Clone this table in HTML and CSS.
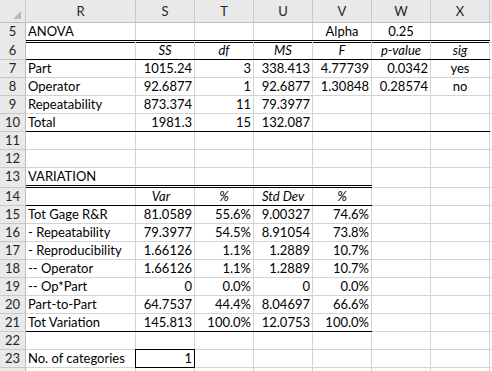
FILE: index.html
```html
<!DOCTYPE html>
<html>
<head>
<meta charset="utf-8">
<link rel="stylesheet" href="styles.css">
</head>
<body>
<div class="sheet">
  <div class="row hdr">
    <div class="corner"><svg width="25" height="22" viewBox="0 0 25 22"><polygon points="21,11 21,19 13,19" fill="#b9b9b9"/></svg></div>
    <div>R</div><div>S</div><div>T</div><div>U</div><div>V</div><div>W</div><div>X</div><div></div>
  </div>
  <div class="row dbl r19">
    <div class="rh">5</div><div class="d">ANOVA</div><div class="d"></div><div class="d"></div><div class="d"></div><div class="d m">Alpha</div><div class="d m">0.25</div><div class="d"></div><div></div>
  </div>
  <div class="row">
    <div class="rh">6</div><div class="t"></div><div class="t m i">SS</div><div class="t m i">df</div><div class="t m i">MS</div><div class="t m i">F</div><div class="t m i">p-value</div><div class="t m i">sig</div><div></div>
  </div>
  <div class="row">
    <div class="rh">7</div><div>Part</div><div class="n">1015.24</div><div class="n">3</div><div class="n">338.413</div><div class="n">4.77739</div><div class="n">0.0342</div><div class="m">yes</div><div></div>
  </div>
  <div class="row">
    <div class="rh">8</div><div>Operator</div><div class="n">92.6877</div><div class="n">1</div><div class="n">92.6877</div><div class="n">1.30848</div><div class="n">0.28574</div><div class="m">no</div><div></div>
  </div>
  <div class="row">
    <div class="rh">9</div><div>Repeatability</div><div class="n">873.374</div><div class="n">11</div><div class="n">79.3977</div><div></div><div></div><div></div><div></div>
  </div>
  <div class="row">
    <div class="rh">10</div><div class="t">Total</div><div class="t n">1981.3</div><div class="t n">15</div><div class="t n">132.087</div><div class="t"></div><div class="t"></div><div class="t"></div><div></div>
  </div>
  <div class="row">
    <div class="rh">11</div><div></div><div></div><div></div><div></div><div></div><div></div><div></div><div></div>
  </div>
  <div class="row">
    <div class="rh">12</div><div></div><div></div><div></div><div></div><div></div><div></div><div></div><div></div>
  </div>
  <div class="row dbl r20">
    <div class="rh">13</div><div class="d">VARIATION</div><div class="d"></div><div class="d"></div><div class="d"></div><div class="d"></div><div></div><div></div><div></div>
  </div>
  <div class="row">
    <div class="rh">14</div><div class="t"></div><div class="t m i var">Var</div><div class="t m i">%</div><div class="t m i">Std Dev</div><div class="t m i">%</div><div></div><div></div><div></div>
  </div>
  <div class="row">
    <div class="rh">15</div><div>Tot Gage R&amp;R</div><div class="n">81.0589</div><div class="n">55.6%</div><div class="n">9.00327</div><div class="n">74.6%</div><div></div><div></div><div></div>
  </div>
  <div class="row">
    <div class="rh">16</div><div>- Repeatability</div><div class="n">79.3977</div><div class="n">54.5%</div><div class="n">8.91054</div><div class="n">73.8%</div><div></div><div></div><div></div>
  </div>
  <div class="row">
    <div class="rh">17</div><div>- Reproducibility</div><div class="n">1.66126</div><div class="n">1.1%</div><div class="n">1.2889</div><div class="n">10.7%</div><div></div><div></div><div></div>
  </div>
  <div class="row">
    <div class="rh">18</div><div>-- Operator</div><div class="n">1.66126</div><div class="n">1.1%</div><div class="n">1.2889</div><div class="n">10.7%</div><div></div><div></div><div></div>
  </div>
  <div class="row">
    <div class="rh">19</div><div>-- Op*Part</div><div class="n">0</div><div class="n">0.0%</div><div class="n">0</div><div class="n">0.0%</div><div></div><div></div><div></div>
  </div>
  <div class="row">
    <div class="rh">20</div><div>Part-to-Part</div><div class="n">64.7537</div><div class="n">44.4%</div><div class="n">8.04697</div><div class="n">66.6%</div><div></div><div></div><div></div>
  </div>
  <div class="row">
    <div class="rh">21</div><div class="t">Tot Variation</div><div class="t n">145.813</div><div class="t n">100.0%</div><div class="t n">12.0753</div><div class="t n">100.0%</div><div></div><div></div><div></div>
  </div>
  <div class="row">
    <div class="rh">22</div><div></div><div></div><div></div><div></div><div></div><div></div><div></div><div></div>
  </div>
  <div class="row">
    <div class="rh">23</div><div>No. of categories</div><div class="n box">1</div><div></div><div></div><div></div><div></div><div></div><div></div>
  </div>
  <div class="row">
    <div class="rh"></div><div></div><div></div><div></div><div></div><div></div><div></div><div></div><div></div>
  </div>
</div>
</body>
</html>
```
FILE: styles.css
```css
html, body {
  margin: 0;
  padding: 0;
  background: #fff;
}
body {
  width: 492px;
  height: 371px;
  overflow: hidden;
  font-family: Lato, "Liberation Sans", sans-serif;
  font-size: 13px;
  color: #000;
}
.sheet {
  display: flex;
  flex-direction: column;
  width: 492px;
  overflow: hidden;
}
.row {
  display: grid;
  grid-template-columns: 26px 110px repeat(7, 59px) 40px;
  height: 18px;
}
.row.r19 { height: 19px; }
.row.r20 { height: 20px; }
.row > div {
  box-sizing: border-box;
  position: relative;
  display: flex;
  align-items: flex-end;
  justify-content: flex-start;
  padding: 0 2px 1px 2px;
  line-height: 16px;
  white-space: nowrap;
  border-right: 1px solid #d4d4d4;
  border-bottom: 1px solid #d4d4d4;
}
.row.dbl > div { padding-bottom: 3px; }
.row.hdr { height: 23px; }
.row.hdr > div {
  background: #e9e9e9;
  color: #262626;
  justify-content: center;
  align-items: center;
  padding: 0;
  border-right-color: #c8c8c8;
  border-bottom-color: #bdbdbd;
}
.row.hdr > .corner {
  padding: 0;
  align-items: flex-start;
  justify-content: flex-start;
}
.row > .rh {
  background: #e9e9e9;
  color: #262626;
  justify-content: center;
  padding-left: 0;
  padding-right: 0;
  border-right-color: #bdbdbd;
  border-bottom-color: #c8c8c8;
}
.row > .n { justify-content: flex-end; }
.row > .m { justify-content: center; }
.i { font-style: italic; }
.row > .var { padding-right: 10px; }
.t::after {
  content: "";
  position: absolute;
  left: 0;
  right: -1px;
  bottom: -1px;
  height: 1px;
  background: #000;
}
.d::after {
  content: "";
  position: absolute;
  left: 0;
  right: -1px;
  bottom: -1px;
  height: 3px;
  box-sizing: border-box;
  border-top: 1px solid #000;
  border-bottom: 1px solid #000;
  background: #fff;
}
.box::after {
  content: "";
  position: absolute;
  left: -1px;
  top: -1px;
  right: -1px;
  bottom: -1px;
  border: 1px solid #000;
}
```
